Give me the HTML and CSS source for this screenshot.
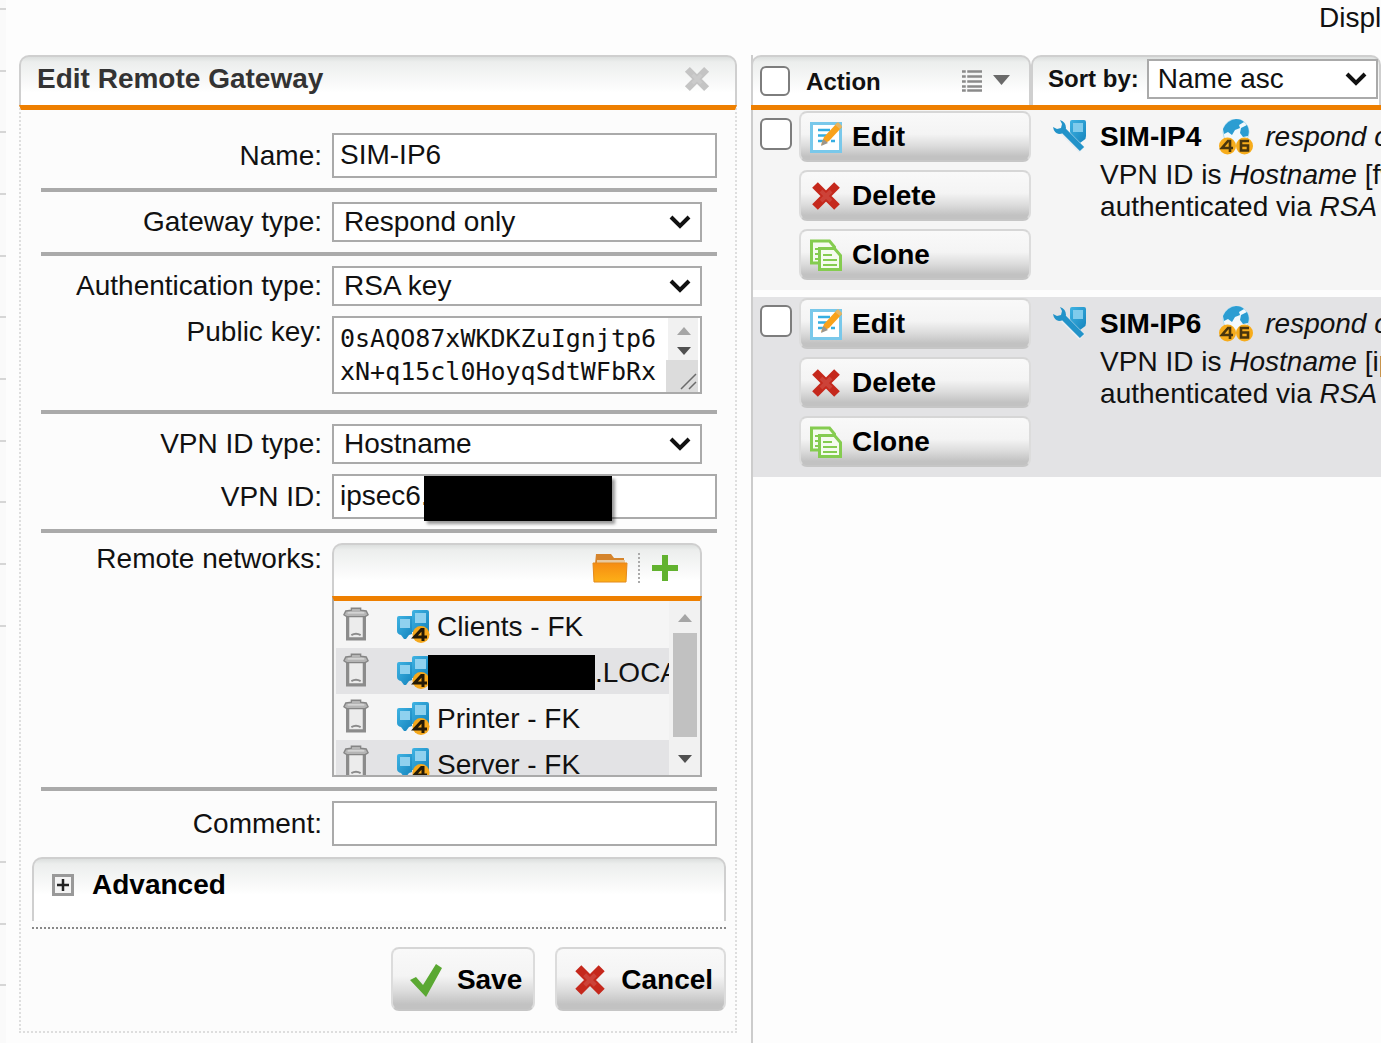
FILE: index.html
```html
<!DOCTYPE html>
<html lang="en">
<head>
    <meta charset="UTF-8">
    <meta name="viewport" content="width=device-width, initial-scale=1.0">
    <title>Remote Gateways</title>
    <link rel="stylesheet" href="styles.css">
</head>
<body>
    <!-- Shared icons -->
    <svg class="sprite" aria-hidden="true">
        <defs>
            <linearGradient id="blue" x1="0" y1="0" x2="1" y2="1">
                <stop offset="0" stop-color="#3fb3e3"/>
                <stop offset="1" stop-color="#1584bd"/>
            </linearGradient>
            <linearGradient id="amber" x1="0" y1="0" x2="0" y2="1">
                <stop offset="0" stop-color="#f68c12"/>
                <stop offset="1" stop-color="#fdb017"/>
            </linearGradient>
        </defs>
        <symbol id="cross" viewBox="0 0 32 32">
            <path d="M5 5 27 27M27 5 5 27" stroke="currentColor" stroke-width="8"/>
            <path d="M11 11 21 21M21 11 11 21" stroke="#fff" stroke-width="4" opacity=".12"/>
        </symbol>
        <symbol id="edit" viewBox="0 0 32 32">
            <path d="M1.500 2.500h29v28h-29z" fill="#fff" stroke="#79c8ea" stroke-width="3"/>
            <path d="M8 9h12M8 14.500h9M8 20h6M21 20h4" stroke="#35aee2" stroke-width="2.500"/>
            <path d="m11 24 3-8L27 2l5 4-13 14z" fill="#f9a21b"/>
            <path d="m28 1 4 4-2 3-5-4z" fill="#e6b563"/>
            <path d="m11 25 2.500-7 4.500 4z" fill="#9b958c"/>
        </symbol>
        <symbol id="clone" viewBox="0 0 32 32">
            <path d="M1.500 2h18l5 6v16h-23z" fill="#f5fbef" stroke="#85cc50" stroke-width="3"/>
            <path d="M5 10h4M5 15h3M5 20h3" stroke="#85cc50" stroke-width="2"/>
            <path d="M9.500 9.500h15l6 7v14h-21z" fill="#f5fbef" stroke="#85cc50" stroke-width="3"/>
            <path d="M13 16h9M13 21h14M13 26h14" stroke="#85cc50" stroke-width="2"/>
        </symbol>
        <symbol id="gateway" viewBox="0 0 34 34">
            <path d="M17 3q0-2 2-2h12q2 0 2 2v14q0 3-2 4l-4 3-9-7q-1-3-1-5z" fill="url(#blue)"/>
            <path d="M20 4h10v9H20z" fill="#7fcbec"/>
            <path d="m9 11 20 20" stroke="#e9eef1" stroke-width="8"/>
            <path d="m10 11 19 19" stroke="#2293c9" stroke-width="6"/>
            <path d="M7 1q6 2 6 8-2 6-7 6-5-1-6-7l4 2 4-1 1-4z" fill="#2293c9"/>
        </symbol>
        <symbol id="ipv" viewBox="0 0 34 36">
            <circle cx="17" cy="13" r="13" fill="#f2f9fd" stroke="#b5def0"/>
            <path d="M4 10Q8 1 17 0q5 0 8 3l-5 3 1 3-5 2-3 5-4-3-4 2zM22 9l6-3q3 6 1 11l-5 1-3-4z" fill="#2c9dd2"/>
            <circle cx="8.500" cy="27" r="8.500" fill="#f7ac1b"/>
            <circle cx="25.500" cy="27" r="8.500" fill="#f7ac1b"/>
            <path d="M11 33V22h-2l-6 7h11" fill="none" stroke="#4a350c" stroke-width="2.600"/>
            <path d="M30 22h-8v9.500h7v-5h-7" fill="none" stroke="#4a350c" stroke-width="2.600"/>
        </symbol>
        <symbol id="network" viewBox="0 0 34 34">
            <path d="M1 9q0-2 2-2h13v18l-3 1-3 4H8l-3-4q-4-1-4-4z" fill="url(#blue)"/>
            <path d="M16 3q0-2 2-2h13q2 0 2 2v20H16z" fill="url(#blue)"/>
            <path d="M4 10h10v9H4zM19 4h11v10H19z" fill="#8fd1ef"/>
            <circle cx="25" cy="25.500" r="8.500" fill="#f5a81c"/>
            <path d="M27 32V20.500h-1.500l-7 7.500H31" fill="none" stroke="#241a06" stroke-width="3"/>
        </symbol>
        <symbol id="trash" viewBox="0 0 28 36">
            <path d="M5 8h18v26H5z" fill="#ececec" stroke="#8b8b8b" stroke-width="3.500"/>
            <path d="M3 4 9 3V1h10v2l6 1 2 4-3 2H4L1 8z" fill="#b5b5b5" stroke="#858585" stroke-width="1.500"/>
            <path d="M5 6h18" stroke="#dadada" stroke-width="1.500"/>
            <path d="M9 30q5-3 10 0" fill="none" stroke="#8b8b8b" stroke-width="2"/>
        </symbol>
    </svg>

    <nav class="side-menu" aria-label="Main menu">
        <ul>
            <li></li><li></li><li></li><li></li><li></li><li></li><li></li><li></li><li></li><li></li><li></li>
        </ul>
        <ul class="lower">
            <li></li><li></li><li></li>
        </ul>
    </nav>

    <section class="panel">
        <header class="tab-header panel-header">
            <h1>Edit Remote Gateway</h1>
            <button type="button" class="icon-button close" aria-label="Close"><svg width="28" height="28"><use href="#cross"/></svg></button>
        </header>
        <form class="panel-body">
            <div class="fields">
                <div class="field">
                    <label for="name">Name:</label>
                    <input type="text" id="name" value="SIM-IP6">
                </div>
                <hr>
                <div class="field">
                    <label for="gateway-type">Gateway type:</label>
                    <select id="gateway-type"><option>Respond only</option></select>
                </div>
                <hr>
                <div class="field">
                    <label for="auth-type">Authentication type:</label>
                    <select id="auth-type"><option>RSA key</option></select>
                </div>
                <div class="field top key-field">
                    <label for="public-key">Public key:</label>
                    <div class="key-box">
                        <textarea id="public-key" spellcheck="false">0sAQO87xWKDKZuIgnjtp6
xN+q15cl0HoyqSdtWFbRx</textarea>
                        <svg width="32" height="74" aria-hidden="true">
                            <path d="M2 0h30v44H2z" fill="#f1f1f1"/>
                            <path d="M0 42h32v32H0z" fill="#dcdcdc"/>
                            <path d="m11 17 7-8 7 8z" fill="#a5a5a5"/>
                            <path d="m11 29 7 8 7-8z" fill="#505050"/>
                            <path d="m15 71 15-15M23 71l7-7" stroke="#6b6b6b" stroke-width="1.500"/>
                        </svg>
                    </div>
                </div>
                <hr>
                <div class="field">
                    <label for="vpn-id-type">VPN ID type:</label>
                    <select id="vpn-id-type"><option>Hostname</option></select>
                </div>
                <div class="field">
                    <label for="vpn-id">VPN ID:</label>
                    <div class="vpn-id-box">
                        <input type="text" id="vpn-id" value="ipsec6.">
                        <span class="redacted"></span>
                    </div>
                </div>
                <hr>
                <div class="field top">
                    <span class="label">Remote networks:</span>
                    <div class="networks">
                        <div class="tab-header networks-header">
                            <button type="button" class="icon-button" aria-label="Browse">
                                <svg width="36" height="30" viewBox="0 0 36 30">
                                    <path d="M4 1h15l3 4h10v6H3z" fill="#d5842c"/>
                                    <path d="M5 7h28v4H5z" fill="#e8c9a0"/>
                                    <path d="M1 10h34l-1 19H2z" fill="url(#amber)" stroke="#e48a1c"/>
                                </svg>
                            </button>
                            <span class="separator"></span>
                            <button type="button" class="icon-button" aria-label="Add">
                                <svg width="26" height="26" viewBox="0 0 26 26"><path d="M13 0v26M0 13h26" stroke="#62b22f" stroke-width="6"/></svg>
                            </button>
                        </div>
                        <div class="networks-list">
                            <ul>
                                <li><svg class="trash"><use href="#trash"/></svg><svg class="net"><use href="#network"/></svg><span class="network-name">Clients - FK</span></li>
                                <li><svg class="trash"><use href="#trash"/></svg><svg class="net"><use href="#network"/></svg><span class="redacted"></span><span class="network-name">.LOCAL</span></li>
                                <li><svg class="trash"><use href="#trash"/></svg><svg class="net"><use href="#network"/></svg><span class="network-name">Printer - FK</span></li>
                                <li><svg class="trash"><use href="#trash"/></svg><svg class="net"><use href="#network"/></svg><span class="network-name">Server - FK</span></li>
                            </ul>
                            <svg width="31" height="174" aria-hidden="true">
                                <path d="M0 0h31v174H0z" fill="#f1f1f1"/>
                                <path d="m9 21 7-8 7 8z" fill="#a5a5a5"/>
                                <path d="M4 32h24v104H4z" fill="#c1c1c1"/>
                                <path d="m9 154 7 8 7-8z" fill="#505050"/>
                            </svg>
                        </div>
                    </div>
                </div>
                <hr>
                <div class="field">
                    <label for="comment">Comment:</label>
                    <input type="text" id="comment">
                </div>
            </div>

            <div class="advanced">
                <button type="button" class="tab-header advanced-toggle">
                    <svg width="22" height="22" viewBox="0 0 22 22"><path d="M1.500 1.500h19v19h-19z" fill="#f4f4f4" stroke="#999" stroke-width="3"/><path d="M11 5v12M5 11h12" stroke="#222" stroke-width="2.500"/></svg>
                    Advanced
                </button>
            </div>

            <div class="form-actions">
                <button type="submit" class="btn"><svg width="34" height="34" viewBox="0 0 34 34"><path d="m1 17 6-3 7 8L27 1l6 4-16 29z" fill="#5aa832"/></svg>Save</button>
                <button type="button" class="btn"><svg class="red" width="34" height="34"><use href="#cross"/></svg>Cancel</button>
            </div>
        </form>
    </section>

    <main class="listing">
        <div class="display-bar">Display:</div>
        <div class="listing-body">
            <div class="listing-header">
                <div class="tab-header action-cell">
                    <input type="checkbox" id="select-all">
                    <label for="select-all">Action</label>
                    <button type="button" class="icon-button" aria-label="Choose action">
                        <svg width="48" height="22" viewBox="0 0 48 22">
                            <path d="M0 1.500h20M0 6.500h20M0 11.500h20M0 16.500h20M0 20.500h20" stroke="#8a8a8a" stroke-width="2.500"/>
                            <path d="M4.500 0v22" stroke="#f6f7f7" stroke-width="1.500"/>
                            <path d="M31 5h17l-8.500 10z" fill="#6a6a6a"/>
                        </svg>
                    </button>
                </div>
                <div class="tab-header sort-cell">
                    <label for="sort">Sort by:</label>
                    <select id="sort"><option>Name asc</option></select>
                </div>
            </div>

            <article class="gateway-row">
                <input type="checkbox" aria-label="Select SIM-IP4">
                <div class="row-actions">
                    <button type="button" class="btn"><svg width="32" height="32"><use href="#edit"/></svg>Edit</button>
                    <button type="button" class="btn"><svg class="red" width="32" height="32"><use href="#cross"/></svg>Delete</button>
                    <button type="button" class="btn"><svg width="32" height="32"><use href="#clone"/></svg>Clone</button>
                </div>
                <svg class="gateway-icon"><use href="#gateway"/></svg>
                <div class="gateway-info">
                    <div class="gateway-title"><strong>SIM-IP4</strong><svg width="34" height="36"><use href="#ipv"/></svg><em>respond only</em></div>
                    <p>VPN ID is <em>Hostname</em> [fw]</p>
                    <p>authenticated via <em>RSA key</em></p>
                </div>
            </article>

            <article class="gateway-row">
                <input type="checkbox" aria-label="Select SIM-IP6">
                <div class="row-actions">
                    <button type="button" class="btn"><svg width="32" height="32"><use href="#edit"/></svg>Edit</button>
                    <button type="button" class="btn"><svg class="red" width="32" height="32"><use href="#cross"/></svg>Delete</button>
                    <button type="button" class="btn"><svg width="32" height="32"><use href="#clone"/></svg>Clone</button>
                </div>
                <svg class="gateway-icon"><use href="#gateway"/></svg>
                <div class="gateway-info">
                    <div class="gateway-title"><strong>SIM-IP6</strong><svg width="34" height="36"><use href="#ipv"/></svg><em>respond only</em></div>
                    <p>VPN ID is <em>Hostname</em> [ipsec6]</p>
                    <p>authenticated via <em>RSA key</em></p>
                </div>
            </article>
        </div>
    </main>
</body>
</html>
```

FILE: styles.css
```css
/* Globals */
* {
    box-sizing: border-box;
}

body {
    margin: 0;
    min-height: 100vh;
    display: flex;
    font-family: "Liberation Sans", Arial, sans-serif;
    font-size: 28px;
    line-height: 32px;
    color: #111;
    background-color: #fdfdfd;
    overflow: hidden;
}

ul {
    list-style: none;
    margin: 0;
    padding: 0;
}

p, h1 {
    margin: 0;
}

svg {
    display: block;
    flex-shrink: 0;
}

button, input, select, textarea {
    font: inherit;
    color: inherit;
    margin: 0;
}

.sprite {
    position: absolute;
    width: 0;
    height: 0;
}

/* Menu edge on the left */
.side-menu {
    flex: 0 0 6px;
    background-color: #fafafa;
}

.side-menu li {
    height: 62px;
    border-bottom: 2px solid #d6d6d6;
}

.side-menu li:first-child {
    height: 10px;
}

.side-menu li:nth-child(3n) {
    height: 61px;
}

.side-menu .lower {
    margin-top: 226px;
}

/* Grey gradient headers */
.tab-header {
    display: flex;
    align-items: center;
    background: linear-gradient(#dcdfde, #eceeed 5px, #fff 36px);
    border: 2px solid #cfcfcf;
    border-bottom: 0;
    border-radius: 10px 10px 0 0;
}

.icon-button {
    border: 0;
    padding: 0;
    background: none;
}

/* Edit panel */
.panel {
    flex: 0 0 52%;
    min-width: 0;
    margin: 55px 14px 0 13px;
}

.panel-header {
    height: 50px;
    padding: 0 24px 4px 16px;
    justify-content: space-between;
}

.panel-header h1 {
    font-size: 28px;
    line-height: 32px;
    color: #333;
}

.close {
    color: #c4c4c4;
}

.panel-body {
    border: 2px dotted #dedede;
    border-top: 5px solid #ee7f00;
    background-color: #fcfcfc;
    padding-bottom: 20px;
}

.fields {
    display: flex;
    flex-direction: column;
    gap: 10px;
    padding: 23px 18px 0 20px;
}

.fields hr {
    width: 100%;
    height: 4px;
    margin: 0;
    border: 0;
    background-color: #aaa;
}

.field {
    display: grid;
    grid-template-columns: 281px minmax(0, 1fr);
    column-gap: 10px;
    align-items: center;
}

.field.top {
    align-items: start;
}

.field label, .field .label {
    text-align: right;
}

input[type="text"], select, .key-box {
    border: 2px solid #aaa;
    background-color: #fff;
    border-radius: 0;
}

input[type="text"] {
    width: 100%;
    height: 45px;
    padding: 0 6px 2px;
}

select {
    height: 40px;
    padding: 0 36px 0 10px;
    appearance: none;
    background: #fff url("data:image/svg+xml,%3Csvg xmlns='http://www.w3.org/2000/svg' width='22' height='14'%3E%3Cpath d='M2 2l9 9 9-9' fill='none' stroke='%23111' stroke-width='4'/%3E%3C/svg%3E") no-repeat right 9px center;
}

.field select, .key-box, .networks {
    margin-right: 15px;
}

.key-field {
    margin-bottom: 6px;
}

.key-box {
    display: flex;
    height: 78px;
    padding-right: 2px;
}

.key-box textarea {
    flex: 1;
    min-width: 0;
    padding: 4px 0 0 6px;
    border: 0;
    resize: none;
    overflow: hidden;
    white-space: pre;
    background: none;
    font-family: "DejaVu Sans Mono", monospace;
    font-size: 25px;
    line-height: 33px;
}

.redacted {
    background-color: #000;
}

.vpn-id-box {
    position: relative;
}

.vpn-id-box .redacted {
    position: absolute;
    left: 92px;
    top: 2px;
    width: 188px;
    height: 45px;
    box-shadow: 3px 3px 3px rgba(0, 0, 0, 0.4);
}

/* Remote networks */
.networks-header {
    height: 53px;
    padding: 0 22px 6px;
    justify-content: flex-end;
}

.networks-header .separator {
    height: 30px;
    margin: 0 12px 0 10px;
    border-left: 2px dotted #aaa;
}

.networks-list {
    display: flex;
    height: 181px;
    border: 2px solid #aaa;
    border-top: 5px solid #ee7f00;
}

.networks-list ul {
    flex: 1;
    min-width: 0;
    overflow: hidden;
    padding: 1px 0 0 2px;
    background-color: #f5f5f5;
}

.networks-list li {
    display: flex;
    align-items: center;
    height: 46px;
    padding: 2px 0 0 7px;
    white-space: nowrap;
}

.networks-list li:nth-child(even) {
    background-color: #e3e3e5;
}

.networks-list .trash {
    width: 26px;
    height: 34px;
    margin: 0 27px 4px 0;
}

.networks-list .net {
    width: 34px;
    height: 34px;
    margin-right: 7px;
}

.networks-list .redacted {
    flex: 0 0 167px;
    height: 35px;
    margin-left: -9px;
}

.network-name {
    padding-top: 2px;
}

/* Advanced section */
.advanced {
    margin: 11px 9px 0 11px;
    padding-bottom: 6px;
    border-bottom: 2px dotted #888;
}

.advanced-toggle {
    width: 100%;
    height: 64px;
    gap: 18px;
    padding: 0 18px 10px;
    font-weight: bold;
    color: #000;
}

/* Buttons */
.btn {
    display: flex;
    align-items: center;
    font-weight: bold;
    color: #000;
    background: linear-gradient(#f9f9f9, #f4f4f4 45%, #dcdcdc 70%, #c2c2c2 92%);
    border: 2px solid;
    border-color: #d6d6d6 #dcdcdc #c6c6c6;
    border-radius: 8px;
}

.btn .red {
    color: #c5281c;
}

.form-actions {
    display: flex;
    justify-content: flex-end;
    gap: 20px;
    margin: 18px 9px 0 0;
}

.form-actions .btn {
    height: 64px;
    gap: 14px;
    padding: 2px 11px 0 16px;
}

/* Gateway list */
.listing {
    flex: 1;
    min-width: 0;
    display: flex;
    flex-direction: column;
    white-space: nowrap;
    overflow: hidden;
}

.display-bar {
    height: 55px;
    padding: 2px 0 0 568px;
}

.listing-body {
    flex: 1;
    border-left: 2px solid #ccc;
}

.listing-header {
    display: flex;
    height: 55px;
    margin-left: -2px;
    border-bottom: 5px solid #ee7f00;
    font-size: 24px;
    font-weight: bold;
}

.action-cell {
    flex: 0 0 280px;
    gap: 16px;
    padding: 0 19px 0 7px;
}

.action-cell label {
    flex: 1;
    padding-top: 2px;
}

.sort-cell {
    flex: 1;
    gap: 8px;
    padding: 0 0 4px 15px;
}

.sort-cell select {
    flex: 0 0 231px;
    padding-left: 9px;
    font-size: 28px;
    font-weight: normal;
}

input[type="checkbox"] {
    appearance: none;
    flex: 0 0 32px;
    height: 32px;
    border: 2px solid #7d7d7d;
    border-radius: 6px;
    background-color: #fff;
}

.action-cell input[type="checkbox"] {
    flex-basis: 30px;
    height: 30px;
}

.gateway-row {
    display: flex;
    align-items: flex-start;
    height: 180px;
    padding-left: 7px;
    background-color: #f5f5f5;
}

.gateway-row + .gateway-row {
    margin-top: 7px;
    background-color: #e3e3e5;
}

.gateway-row input[type="checkbox"] {
    margin: 8px 7px 0 0;
}

.row-actions {
    flex: 0 0 232px;
    display: flex;
    flex-direction: column;
    gap: 8px;
    padding-top: 1px;
}

.row-actions .btn {
    height: 51px;
    gap: 10px;
    padding: 0 9px;
}

.gateway-icon {
    width: 34px;
    height: 34px;
    margin: 9px 13px 0 22px;
}

.gateway-title {
    display: flex;
    align-items: center;
    height: 49px;
    padding-top: 4px;
}

.gateway-title svg {
    margin: 0 12px 0 18px;
}

.gateway-title strong {
    color: #000;
}
```
